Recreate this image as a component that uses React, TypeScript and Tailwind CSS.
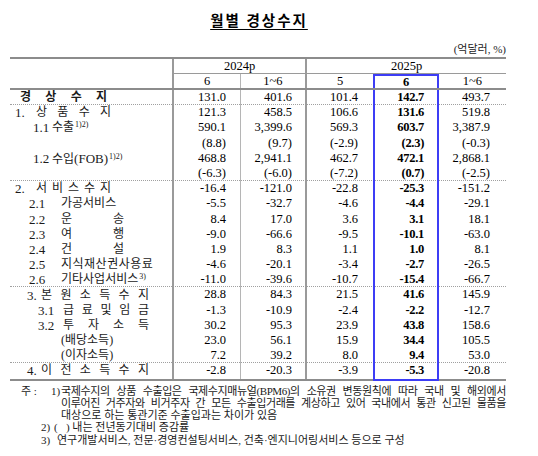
import type { ReactNode } from "react"
import { cx } from "class-variance-authority"

type Row = { label: ReactNode; v: string[]; dot?: boolean }

function Spread({ text, className }: { text: string; className: string }) {
  return (
    <span className={cx("flex justify-between", className)}>
      {[...text].map((c, i) => (
        <span key={i}>{c}</span>
      ))}
    </span>
  )
}

function Sup({ children }: { children: ReactNode }) {
  return <sup className="ml-px text-[8px]">{children}</sup>
}

const rows: Row[] = [
  {
    label: (
      <span className="flex pl-[10px]">
        <Spread text="경상수지" className="w-[87px] font-bold" />
      </span>
    ),
    v: ["131.0", "401.6", "101.4", "142.7", "493.7"],
    dot: true,
  },
  {
    label: (
      <span className="flex pl-[5px]">
        <span className="w-[21px] text-[13px]">1.</span>
        <Spread text="상품수지" className="w-[75px]" />
      </span>
    ),
    v: ["121.3", "458.5", "106.6", "131.6", "519.8"],
  },
  {
    label: (
      <span className="flex pl-[23px]">
        <span className="w-[19px] text-[13px]">1.1</span>
        <span>
          수출<Sup>1)2)</Sup>
        </span>
      </span>
    ),
    v: ["590.1", "3,399.6", "569.3", "603.7", "3,387.9"],
  },
  { label: null, v: ["(8.8)", "(9.7)", "(-2.9)", "(2.3)", "(-0.3)"] },
  {
    label: (
      <span className="flex pl-[23px]">
        <span className="w-[19px] text-[13px]">1.2</span>
        <span>
          수입<span className="text-[13px]">(FOB)</span>
          <Sup>1)2)</Sup>
        </span>
      </span>
    ),
    v: ["468.8", "2,941.1", "462.7", "472.1", "2,868.1"],
  },
  { label: null, v: ["(-6.3)", "(-6.0)", "(-7.2)", "(0.7)", "(-2.5)"], dot: true },
  {
    label: (
      <span className="flex pl-[5px]">
        <span className="w-[21px] text-[13px]">2.</span>
        <Spread text="서비스수지" className="w-[75px]" />
      </span>
    ),
    v: ["-16.4", "-121.0", "-22.8", "-25.3", "-151.2"],
  },
  {
    label: (
      <span className="flex pl-[19px]">
        <span className="w-[32px] text-[13px]">2.1</span>
        <span>가공서비스</span>
      </span>
    ),
    v: ["-5.5", "-32.7", "-4.6", "-4.4", "-29.1"],
  },
  {
    label: (
      <span className="flex pl-[19px]">
        <span className="w-[32px] text-[13px]">2.2</span>
        <Spread text="운송" className="w-[63px]" />
      </span>
    ),
    v: ["8.4", "17.0", "3.6", "3.1", "18.1"],
  },
  {
    label: (
      <span className="flex pl-[19px]">
        <span className="w-[32px] text-[13px]">2.3</span>
        <Spread text="여행" className="w-[63px]" />
      </span>
    ),
    v: ["-9.0", "-66.6", "-9.5", "-10.1", "-63.0"],
  },
  {
    label: (
      <span className="flex pl-[19px]">
        <span className="w-[32px] text-[13px]">2.4</span>
        <Spread text="건설" className="w-[63px]" />
      </span>
    ),
    v: ["1.9", "8.3", "1.1", "1.0", "8.1"],
  },
  {
    label: (
      <span className="flex pl-[19px]">
        <span className="w-[32px] text-[13px]">2.5</span>
        <span className="tracking-[0.5px]">지식재산권사용료</span>
      </span>
    ),
    v: ["-4.6", "-20.1", "-3.4", "-2.7", "-26.5"],
  },
  {
    label: (
      <span className="flex pl-[19px]">
        <span className="w-[32px] text-[13px]">2.6</span>
        <span>
          기타사업서비스<Sup>3)</Sup>
        </span>
      </span>
    ),
    v: ["-11.0", "-39.6", "-10.7", "-15.4", "-66.7"],
    dot: true,
  },
  {
    label: (
      <span className="flex pl-[17px]">
        <span className="w-[14px] text-[13px]">3.</span>
        <Spread text="본원소득수지" className="w-[108px]" />
      </span>
    ),
    v: ["28.8", "84.3", "21.5", "41.6", "145.9"],
  },
  {
    label: (
      <span className="flex pl-[28px]">
        <span className="w-[25px] text-[13px]">3.1</span>
        <Spread text="급료및임금" className="w-[86px]" />
      </span>
    ),
    v: ["-1.3", "-10.9", "-2.4", "-2.2", "-12.7"],
  },
  {
    label: (
      <span className="flex pl-[28px]">
        <span className="w-[25px] text-[13px]">3.2</span>
        <Spread text="투자소득" className="w-[86px]" />
      </span>
    ),
    v: ["30.2", "95.3", "23.9", "43.8", "158.6"],
  },
  {
    label: <span className="pl-[51px]">(배당소득)</span>,
    v: ["23.0", "56.1", "15.9", "34.4", "105.5"],
  },
  {
    label: <span className="pl-[51px]">(이자소득)</span>,
    v: ["7.2", "39.2", "8.0", "9.4", "53.0"],
    dot: true,
  },
  {
    label: (
      <span className="flex pl-[17px]">
        <span className="w-[14px] text-[13px]">4.</span>
        <Spread text="이전소득수지" className="w-[108px]" />
      </span>
    ),
    v: ["-2.8", "-20.3", "-3.9", "-5.3", "-20.8"],
  },
]

const cols = "grid grid-cols-[164px_67px_66px_66px_66px_67px]"

export default function App() {
  return (
    <div className="w-[538px] h-[456px] bg-white text-black font-['Liberation_Serif','Noto_Sans_CJK_KR',serif]">
      <div className="pt-[12px] pr-[20px] text-center text-[14.5px] leading-[18px]">
        <span className="font-bold tracking-[2px] underline underline-offset-[3px] decoration-1">
          월별 경상수지
        </span>
      </div>
      <div className="mt-[12px] w-[506px] text-right text-[11px] leading-[15px] text-[#222]">
        (억달러, %)
      </div>

      <div className="ml-[10px] w-[496px] border-b-2 border-[#8c8c8c] text-[12.5px]">
        <div className={cx(cols, "border-t-2 border-b-2 border-[#8c8c8c] leading-[14px]")}>
          <div className="row-span-2 border-r-2 border-[#9a9a9a]" />
          <div className="col-span-2 h-[15px] border-r-2 border-b border-[#9a9a9a] text-center">
            2024p
          </div>
          <div className="col-span-3 h-[15px] border-b border-[#9a9a9a] text-center">2025p</div>
          <div className="h-[14px] border-r border-[#b5b5b5] text-center">6</div>
          <div className="h-[14px] border-r-2 border-[#9a9a9a] text-center">1~6</div>
          <div className="h-[14px] text-center">5</div>
          <div className="h-[14px] border-x-2 border-t-2 border-[#3d3df5] text-center font-bold leading-[12px]">
            6
          </div>
          <div className="h-[14px] text-center">1~6</div>
        </div>

        {rows.map((r, i) => {
          const last = i === rows.length - 1
          return (
            <div
              key={i}
              className={cx(
                cols,
                "h-[15.2px] leading-[15px]",
                r.dot && "border-b border-dotted border-[#a0a0a0]",
              )}
            >
              <div className="flex items-center border-r-2 border-[#9a9a9a] text-[12px] text-[#1a1a1a]">
                {r.label}
              </div>
              <div className="border-r border-[#b5b5b5] pr-[14px] text-right">{r.v[0]}</div>
              <div className="border-r-2 border-[#9a9a9a] pr-[13px] text-right">{r.v[1]}</div>
              <div className="pr-[15px] text-right">{r.v[2]}</div>
              <div
                className={cx(
                  "border-x-2 border-[#3d3df5] pr-[13px] text-right font-bold tracking-[-0.3px]",
                  last && "mb-[-2px] border-b-2",
                )}
              >
                {r.v[3]}
              </div>
              <div className="pr-[16px] text-right">{r.v[4]}</div>
            </div>
          )
        })}
      </div>

      <div className="mt-[4px] text-[11px] leading-[12.3px] text-[#1a1a1a]">
        <div className="flex">
          <span className="w-[51px] shrink-0 pl-[21px]">주 :</span>
          <span className="w-[10px] shrink-0">1)</span>
          <div className="w-[445px]">
            <div className="tracking-[-0.4px] whitespace-nowrap [text-align-last:justify]">
              국제수지의 상품 수출입은 국제수지매뉴얼(BPM6)의 소유권 변동원칙에 따라 국내 및 해외에서
            </div>
            <div className="tracking-[-0.4px] whitespace-nowrap [text-align-last:justify]">
              이루어진 거주자와 비거주자 간 모든 수출입거래를 계상하고 있어 국내에서 통관 신고된 물품을
            </div>
            <div>대상으로 하는 통관기준 수출입과는 차이가 있음</div>
          </div>
        </div>
        <div className="flex pl-[41px]">
          <span className="w-[13px] shrink-0">2)</span>
          <span>(&nbsp;&nbsp;&nbsp;) 내는 전년동기대비 증감률</span>
        </div>
        <div className="flex pl-[41px]">
          <span className="w-[16px] shrink-0">3)</span>
          <span>연구개발서비스, 전문·경영컨설팅서비스, 건축·엔지니어링서비스 등으로 구성</span>
        </div>
      </div>
    </div>
  )
}
